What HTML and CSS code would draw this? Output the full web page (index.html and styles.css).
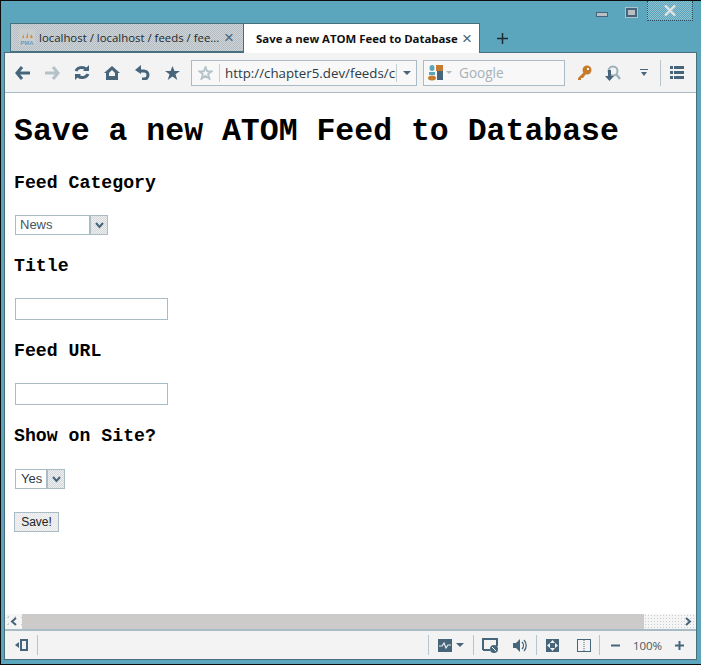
FILE: index.html
```html
<!DOCTYPE html>
<html lang="en">

<head>
    <meta charset="UTF-8">
    <title>Save a new ATOM Feed to Database</title>
    <link rel="stylesheet" href="styles.css">
</head>

<body>
    <div class="window">
        <div class="titlebar">
            <span class="win-min"></span>
            <span class="win-max"></span>
            <span class="win-close">
                <svg width="12" height="11" viewBox="0 0 12 11"><path d="M1 .5l10 10M11 .5l-10 10" stroke="#dfe3e5" stroke-width="2.400" fill="none"/></svg>
            </span>
        </div>

        <div class="tabbar">
            <div class="tab tab-off">
                <svg class="favicon" width="16" height="17" viewBox="0 0 16 17">
                    <rect width="16" height="17" fill="#c9cdcd"/>
                    <path d="M3 9l2-4v4zM7 9l2-6v6zM11 9l1-4 2 4z" fill="#d98a3a"/>
                    <text x="8" y="16" text-anchor="middle" class="pma">PMA</text>
                </svg>
                <span class="tab-label">localhost / localhost / feeds / fee...</span>
                <span class="tab-x">×</span>
            </div>
            <div class="tab tab-on">
                <span class="tab-label">Save a new ATOM Feed to Database</span>
                <span class="tab-x">×</span>
            </div>
            <svg class="tab-new" width="11" height="11" viewBox="0 0 11 11"><path d="M5.500 0v11M0 5.500h11" stroke="#1f2a30" stroke-width="1.500"/></svg>
        </div>

        <div class="inner">
            <div class="toolbar">
                <span class="tool">
                    <svg width="15" height="14" viewBox="0 0 15 14"><path d="M7 1L2 7l5 6M2 7h13" stroke="#47657a" stroke-width="3" fill="none"/></svg>
                </span>
                <span class="tool">
                    <svg width="15" height="14" viewBox="0 0 15 14"><path d="M8 1l5 6-5 6M13 7H0" stroke="#b4c2c9" stroke-width="3" fill="none"/></svg>
                </span>
                <span class="tool">
                    <svg width="16" height="15" viewBox="0 0 16 15"><path d="M2 6a6 5 0 0 1 10-2M14 9a6 5 0 0 1-10 2" stroke="#47657a" stroke-width="3" fill="none"/><path d="M15 0v6H9zM1 15V9h6z" fill="#47657a"/></svg>
                </span>
                <span class="tool">
                    <svg width="16" height="14" viewBox="0 0 16 14"><path d="M8 0l8 7h-2v7H2V7H0z" fill="#47657a"/><path d="M8 4l3 3v4H5V7z" fill="#f3f3f3"/><rect x="5" y="10" width="6" height="1" fill="#47657a"/></svg>
                </span>
                <span class="tool">
                    <svg width="15" height="15" viewBox="0 0 15 15"><path d="M5 6h4a4 4 0 0 1 0 8H7" stroke="#47657a" stroke-width="3" fill="none"/><path d="M6 0v9L0 5z" fill="#47657a"/></svg>
                </span>
                <span class="tool">
                    <svg width="15" height="14" viewBox="0 0 15 14"><path d="M7.500 0l2 5h5.500l-4.500 3.300 1.800 5.700-4.800-3.500-4.800 3.500 1.800-5.700L0 5h5.500z" fill="#47657a"/></svg>
                </span>

                <div class="address">
                    <span class="addr-star">
                        <svg width="15" height="14" viewBox="0 0 15 14"><path d="M7.500 1l1.700 4.300h4.600l-3.700 2.800 1.400 4.700-4-2.900-4 2.900 1.400-4.700-3.700-2.800h4.600z" fill="none" stroke="#b4c2c9" stroke-width="1.800"/></svg>
                    </span>
                    <span class="addr-url">http://chapter5.dev/feeds/cr</span>
                    <span class="addr-drop"><i class="caret caret-dark"></i></span>
                </div>

                <div class="search">
                    <svg width="16" height="16" viewBox="0 0 16 16">
                        <ellipse cx="4" cy="3" rx="2.500" ry="3" fill="#5ba6bc"/>
                        <path d="M8 0h7v6H8z" fill="#c67c2c"/>
                        <path d="M9 6h6v9H9z" fill="#47657a"/>
                        <path d="M1 7h6v3H1z" fill="#5ba6bc"/>
                        <ellipse cx="4" cy="13" rx="4" ry="2.500" fill="#c67c2c"/>
                    </svg>
                    <i class="caret caret-light"></i>
                    <span class="search-text">Google</span>
                </div>

                <span class="tool tool-key">
                    <svg width="15" height="15" viewBox="0 0 15 15"><circle cx="10" cy="5" r="4.500" fill="#c67c2c"/><path d="M7 7L1 13v2h3v-2h2l3-4z" fill="#c67c2c"/><rect x="10" y="3" width="2" height="2" fill="#f3f3f3"/></svg>
                </span>
                <span class="tool tool-find">
                    <svg width="16" height="16" viewBox="0 0 16 16"><circle cx="8" cy="6" r="4.500" fill="none" stroke="#9eb1bb" stroke-width="2"/><path d="M11 9l4 5" stroke="#9eb1bb" stroke-width="2.400"/><path d="M3 5v6H0l4.500 5L9 11H6V5z" fill="#47657a"/></svg>
                </span>
                <span class="tool tool-more">
                    <svg width="8" height="7" viewBox="0 0 8 7"><path d="M0 0h8v1H0z" fill="#47657a"/><path d="M1 3h6L4 7z" fill="#47657a"/></svg>
                </span>
                <span class="tool-sep"></span>
                <span class="tool tool-menu">
                    <svg width="14" height="13" viewBox="0 0 14 13"><path d="M0 0h3v3H0zM4 0h10v3H4zM0 5h3v3H0zM4 5h10v3H4zM0 10h3v3H0zM4 10h10v3H4z" fill="#47657a"/></svg>
                </span>
            </div>

            <div class="page">
                <h1>Save a new ATOM Feed to Database</h1>
                <h3>Feed Category</h3>
                <p>
                    <span class="select select-cat"><span class="select-text">News</span><span class="select-btn"><svg width="9" height="7" viewBox="0 0 9 7"><path d="M1 1l3.500 4L8 1" stroke="#47657a" stroke-width="2" fill="none"/></svg></span></span>
                </p>
                <h3>Title</h3>
                <p><span class="textbox"></span></p>
                <h3>Feed URL</h3>
                <p><span class="textbox"></span></p>
                <h3>Show on Site?</h3>
                <p class="row-show">
                    <span class="select select-show"><span class="select-text">Yes</span><span class="select-btn"><svg width="9" height="7" viewBox="0 0 9 7"><path d="M1 1l3.500 4L8 1" stroke="#47657a" stroke-width="2" fill="none"/></svg></span></span>
                </p>
                <p class="row-save"><span class="save">Save!</span></p>
            </div>

            <div class="hscroll">
                <span class="scroll-arrow">
                    <svg width="8" height="9" viewBox="0 0 8 9"><path d="M6 1L2 4.500 6 8" stroke="#47657a" stroke-width="2" fill="none"/></svg>
                </span>
                <span class="scroll-thumb"></span>
                <span class="scroll-rest">
                    <svg width="8" height="9" viewBox="0 0 8 9"><path d="M2 1l4 3.500L2 8" stroke="#47657a" stroke-width="2" fill="none"/></svg>
                </span>
            </div>

            <div class="statusbar">
                <span class="stat stat-panel">
                    <svg width="13" height="12" viewBox="0 0 13 12"><path d="M0 6l4-3v6z" fill="#47657a"/><rect x="6" y="1" width="6" height="10" fill="none" stroke="#47657a" stroke-width="2"/></svg>
                </span>
                <span class="stat-sep"></span>
                <span class="stat-fill"></span>
                <span class="stat-sep"></span>
                <span class="stat stat-graph">
                    <svg width="14" height="13" viewBox="0 0 14 13"><rect width="14" height="13" fill="#47657a"/><path d="M1 7h3l2-3 2 5 2-3h3" stroke="#e7ecee" stroke-width="1.200" fill="none"/></svg>
                    <i class="caret caret-mid"></i>
                </span>
                <span class="stat-sep"></span>
                <span class="stat stat-wide">
                    <svg width="16" height="15" viewBox="0 0 16 15"><path d="M1 12V1h14v7" fill="none" stroke="#47657a" stroke-width="2"/><path d="M1 12h7" stroke="#47657a" stroke-width="2"/><circle cx="12" cy="11" r="4" fill="#47657a"/><path d="M10 9l4 4" stroke="#f3f3f3"/></svg>
                </span>
                <span class="stat stat-wide">
                    <svg width="15" height="13" viewBox="0 0 15 13"><path d="M0 4h3l4-4v13L3 9H0z" fill="#47657a"/><path d="M9 3a5 5 0 0 1 0 7M11 1a8 8 0 0 1 0 11" stroke="#47657a" stroke-width="1.300" fill="none"/></svg>
                </span>
                <span class="stat-sep"></span>
                <span class="stat stat-wide">
                    <svg width="13" height="13" viewBox="0 0 13 13"><rect width="13" height="13" fill="#47657a"/><path d="M6.500 1L9 4H4zM6.500 12L4 9h5zM1 6.500L4 4v5zM12 6.500L9 9V4z" fill="#f3f3f3"/></svg>
                </span>
                <span class="stat stat-wide">
                    <svg width="14" height="13" viewBox="0 0 14 13"><rect x=".5" y=".5" width="13" height="12" fill="none" stroke="#47657a"/><path d="M7 1v11" stroke="#47657a" stroke-dasharray="1 1"/></svg>
                </span>
                <span class="stat-sep"></span>
                <span class="stat stat-zoom-btn">
                    <svg width="9" height="9" viewBox="0 0 9 9"><path d="M0 4.500h9" stroke="#47657a" stroke-width="2"/></svg>
                </span>
                <span class="zoom-val">100%</span>
                <span class="stat stat-zoom-btn">
                    <svg width="9" height="9" viewBox="0 0 9 9"><path d="M0 4.500h9M4.500 0v9" stroke="#47657a" stroke-width="2"/></svg>
                </span>
            </div>
        </div>
    </div>
</body>

</html>
```

FILE: styles.css
```css
* {
    margin: 0;
    padding: 0;
    box-sizing: border-box;
}

body {
    width: 701px;
    height: 665px;
    overflow: hidden;
    background: #5ba6bc;
    font-family: "Open Sans", "Liberation Sans", sans-serif;
}

.window {
    width: 701px;
    height: 665px;
    display: flex;
    flex-direction: column;
    border: 1px solid #0c0c0c;
    border-right-width: 0;
    background: #5ba6bc;
}

.titlebar {
    height: 22px;
    display: flex;
    justify-content: flex-end;
    align-items: flex-start;
    padding-right: 8px;
}

.win-min {
    width: 12px;
    height: 5px;
    margin: 11px 0 0 0;
    background: #b7c0c4;
    border: 1px solid #47657a;
}

.win-max {
    width: 11px;
    height: 9px;
    margin: 7px 0 0 18px;
    border: 2px solid #47657a;
    background: #b7c0c4;
    outline: 1px solid #a9c2cc;
}

.win-close {
    width: 46px;
    height: 20px;
    margin-left: 10px;
    display: flex;
    align-items: center;
    justify-content: center;
    background: repeating-conic-gradient(#8fc0cf 0 25%, #5ba6bc 0 50%) 0 0 / 2px 2px;
    border: 1px dotted #30505f;
    border-top: 0;
}

.tabbar {
    height: 30px;
    display: flex;
    align-items: stretch;
    padding-left: 9px;
    position: relative;
    z-index: 1;
}

.tab {
    display: flex;
    align-items: center;
    font-size: 11.400px;
    height: 30px;
}

.tab-off {
    width: 233px;
    height: 29px;
    padding: 0 9px 0 8px;
    color: #1f2a30;
    background: repeating-conic-gradient(#b3bdc2 0 25%, #cdd3d6 0 50%) 0 0 / 2px 2px;
    border: 1px solid #47707f;
    border-right: 0;
}

.favicon {
    flex: none;
    margin-right: 4px;
}

.pma {
    font-family: "Liberation Sans", sans-serif;
    font-size: 6px;
    font-weight: 700;
    fill: #5f9fc6;
}

.tab-on {
    width: 237px;
    padding: 0 7px 0 12px;
    background: #fff;
    color: #111;
    font-weight: 700;
    border: 1px solid #47707f;
    border-bottom: 0;
}

.tab-label {
    flex: 1;
    white-space: nowrap;
}

.tab-x {
    font-size: 17px;
    font-weight: 400;
    line-height: 17px;
    color: #47657a;
    font-family: "Liberation Sans", sans-serif;
}

.tab-new {
    align-self: center;
    margin-left: 17px;
}

.inner {
    flex: 1;
    min-height: 0;
    margin: -1px 4px 4px 3px;
    display: flex;
    flex-direction: column;
    background: #fff;
    border: 1px solid #47707f;
}

.toolbar {
    height: 40px;
    flex: none;
    display: flex;
    align-items: center;
    padding-left: 2px;
    background: #f3f3f3;
    border-bottom: 1px solid #a9bcc6;
}

.tool {
    width: 30px;
    height: 26px;
    flex: none;
    display: flex;
    align-items: center;
    justify-content: center;
}

.address,
.search {
    height: 26px;
    display: flex;
    align-items: center;
    background: #f8f8f8;
    border: 1px solid #a9bcc6;
    font-size: 13.300px;
}

.address {
    width: 226px;
    margin-left: 4px;
}

.addr-star {
    width: 28px;
    height: 18px;
    flex: none;
    display: flex;
    align-items: center;
    justify-content: center;
    border-right: 1px solid #c3cfd5;
}

.addr-url {
    width: 176px;
    padding-left: 5px;
    overflow: hidden;
    white-space: nowrap;
    color: #2d3b44;
    flex: none;
}

.addr-drop {
    flex: 1;
    height: 18px;
    display: flex;
    align-items: center;
    justify-content: center;
    border-left: 1px solid #c3cfd5;
}

.caret {
    display: block;
    width: 0;
    height: 0;
    border-left: 4px solid transparent;
    border-right: 4px solid transparent;
    border-top: 4px solid #47657a;
}

.caret-light {
    border-left-width: 3px;
    border-right-width: 3px;
    border-top-width: 3px;
    border-top-color: #a9bcc6;
    margin: 0 7px 0 2px;
}

.caret-mid {
    margin-left: 4px;
}

.search {
    width: 142px;
    margin-left: 6px;
    padding-left: 4px;
}

.search-text {
    color: #a6b2b8;
    font-size: 13.600px;
}

.tool-key {
    margin-left: 4px;
}

.tool-find {
    margin-left: -1px;
}

.tool-more {
    width: 32px;
}

.tool-sep {
    width: 1px;
    height: 26px;
    background: #b7c6cd;
}

.tool-menu {
    margin-left: 1px;
}

.page {
    flex: 1;
    min-height: 0;
    padding: 0 9px;
    background: #fff;
    color: #000;
    font-family: "Liberation Mono", monospace;
    overflow: hidden;
}

.page h1 {
    font-size: 31.500px;
    line-height: 36px;
    margin: 21px 0 23px;
    white-space: nowrap;
}

.page h3 {
    font-size: 18.200px;
    line-height: 21px;
    margin: 0;
}

.page p {
    margin: 21px 0 21px 1px;
    font-family: "Liberation Sans", sans-serif;
    display: flex;
    align-items: center;
}

.page .row-show {
    margin-top: 22px;
}

.page .row-save {
    margin-top: 23px;
}

.select {
    display: flex;
    height: 20px;
    border: 1px solid #a9bcc6;
    font-size: 13px;
    color: #47565f;
}

.select-cat {
    width: 93px;
}

.select-show {
    width: 50px;
}

.select-text {
    flex: 1;
    line-height: 18px;
    padding-left: 4px;
}

.select-show .select-text {
    color: #2d3b44;
    padding-left: 5px;
}

.select-btn {
    width: 17px;
    display: flex;
    align-items: center;
    justify-content: center;
    border-left: 1px solid #a9bcc6;
    outline: 1px solid #a9bcc6;
    background: repeating-conic-gradient(#d5d9db 0 25%, #eceeef 0 50%) 0 0 / 2px 2px;
}

.textbox {
    display: block;
    width: 153px;
    height: 22px;
    border: 1px solid #a9bcc6;
    background: #fff;
}

.save {
    display: block;
    margin-left: -1px;
    width: 45px;
    height: 20px;
    line-height: 18px;
    text-align: center;
    font-size: 12px;
    color: #222;
    border: 1px solid #a9bcc6;
    background: repeating-conic-gradient(#e2e4e5 0 25%, #f4f4f4 0 50%) 0 0 / 2px 2px;
}

.hscroll {
    height: 15px;
    flex: none;
    display: flex;
    background: #fff;
}

.scroll-arrow {
    width: 17px;
    display: flex;
    align-items: center;
    justify-content: center;
    background: radial-gradient(#c8cfd2 1px, #f5f5f5 1px) 0 0 / 7px 7px;
}

.scroll-thumb {
    width: 622px;
    background: #cccbc9;
}

.scroll-rest {
    flex: 1;
    display: flex;
    align-items: center;
    justify-content: flex-end;
    padding-right: 4px;
    background: radial-gradient(#c8cfd2 1px, #f5f5f5 1px) 0 0 / 3px 3px;
}

.statusbar {
    height: 30px;
    flex: none;
    display: flex;
    align-items: center;
    padding-right: 1px;
    background: #f3f3f3;
    border-top: 2px solid #a9bcc6;
}

.stat {
    height: 20px;
    display: flex;
    align-items: center;
    justify-content: center;
    flex: none;
}

.stat-panel {
    width: 32px;
}

.stat-fill {
    flex: 1;
}

.stat-sep {
    width: 1px;
    height: 20px;
    background: #b7c6cd;
    flex: none;
}

.stat-graph {
    width: 44px;
}

.stat-wide {
    width: 31px;
}

.stat-zoom-btn {
    width: 31px;
}

.zoom-val {
    width: 33px;
    text-align: center;
    font-size: 11.500px;
    color: #47565f;
    white-space: nowrap;
}
```
